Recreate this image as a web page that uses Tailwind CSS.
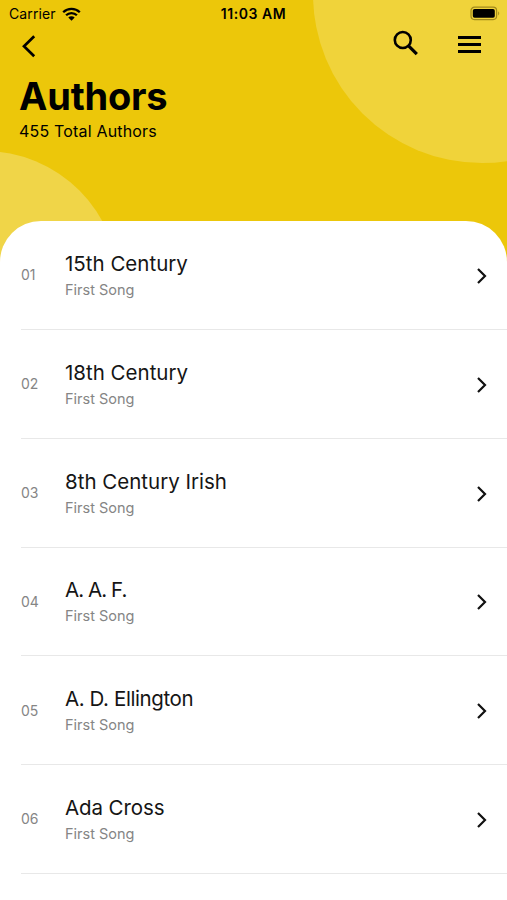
<!DOCTYPE html>
<html lang="en">
<head>
<meta charset="utf-8">
<title>Authors</title>
<script src="https://cdn.jsdelivr.net/npm/@tailwindcss/browser@4"></script>
</head>
<body class="bg-white font-['Inter',sans-serif] text-black">
<div class="relative h-[900px] w-[507px] overflow-hidden bg-[#ecc70a]">
  <div class="absolute left-[313px] top-[-175px] size-[338px] rounded-full bg-[#f0d33a]"></div>
  <div class="absolute left-[-151px] top-[151px] size-[270px] rounded-full bg-[#f0d548]"></div>
  <div class="relative flex h-full flex-col">
    <header class="h-[220.5px] shrink-0">
      <div class="grid h-[27px] grid-cols-3 items-center pl-[9px] pr-[6px] text-[14px]">
        <div class="flex items-center gap-[6px]"><span class="tracking-[0.1px]">Carrier</span>
          <svg class="h-[14px] w-[19px]" viewBox="0 0 19 14" fill="none" stroke="#000" stroke-width="2.3"><path d="M1.2 5.2a11.8 11.8 0 0 1 16.6 0M4.1 8.3a7.6 7.6 0 0 1 10.8 0"/><path d="M6.3 10.5a4.5 4.5 0 0 1 6.4 0L9.5 13.7z" fill="#000" stroke="none"/></svg>
        </div>
        <div class="-ml-[3px] text-center font-semibold tracking-[0.55px] whitespace-nowrap">11:03 AM</div>
        <svg class="h-[15px] w-[31px] justify-self-end" viewBox="0 0 31 15"><rect x="1" y="1.2" width="25.6" height="12.4" rx="3.5" fill="none" stroke="#a18a1c" stroke-width="1.2"/><rect x="2.8" y="3" width="22" height="8.8" rx="1.8"/><path d="M28.2 5.2q2 2.2 0 4.4z" fill="#a18a1c"/></svg>
      </div>
      <div class="flex h-[43px] items-start pl-[20px] pr-[25px]">
        <svg class="mt-[6px] h-[26px] w-[18px]" viewBox="0 0 18 26" fill="none" stroke="#000" stroke-width="2.7"><path d="M14.2 3.2 4 13.2l10.2 10"/></svg>
        <svg class="ml-auto mt-[3px] size-[27px]" viewBox="0 0 27 27" fill="none" stroke="#000"><circle cx="10.8" cy="10" r="8" stroke-width="2.6"/><path d="m16.8 16.2 8 8" stroke-width="3.2"/></svg>
        <svg class="ml-[38px] mt-[8px] h-[20px] w-[25px]" viewBox="0 0 25 20"><path d="M1 1h23v3H1zM1 8h23v3H1zM1 15h23v3H1z"/></svg>
      </div>
      <h1 class="pl-[19px] text-[38px] leading-[52px] font-bold tracking-[-0.2px]">Authors</h1>
      <p class="pl-[19px] text-[16px] leading-[18px] tracking-[0.18px]">455 Total Authors</p>
    </header>
    <main class="flex-1 rounded-t-[41px] bg-white">
      <div class="flex h-[108.5px] items-center pl-[21px]"><span class="w-[44px] text-[14px] text-[#858585]">01</span><div class="flex-1 pt-[3px]"><div class="text-[20.5px] leading-[27px] text-[#151515]">15th Century</div><div class="text-[14.5px] leading-[26px] text-[#858585]">First Song</div></div><svg class="mr-[18px] mt-[2px] h-[18px] w-[14px]" viewBox="0 0 14 18" fill="none" stroke="#111" stroke-width="2.2"><path d="m3 2 7 7-7 7"/></svg></div>
      <div class="ml-[21px] flex h-[108.75px] items-center border-t border-[#e8e8e8]"><span class="w-[44px] text-[14px] text-[#858585]">02</span><div class="flex-1 pt-[3px]"><div class="text-[20.5px] leading-[27px] text-[#151515]">18th Century</div><div class="text-[14.5px] leading-[26px] text-[#858585]">First Song</div></div><svg class="mr-[18px] mt-[2px] h-[18px] w-[14px]" viewBox="0 0 14 18" fill="none" stroke="#111" stroke-width="2.2"><path d="m3 2 7 7-7 7"/></svg></div>
      <div class="ml-[21px] flex h-[108.75px] items-center border-t border-[#e8e8e8]"><span class="w-[44px] text-[14px] text-[#858585]">03</span><div class="flex-1 pt-[3px]"><div class="text-[20.5px] leading-[27px] text-[#151515]">8th Century Irish</div><div class="text-[14.5px] leading-[26px] text-[#858585]">First Song</div></div><svg class="mr-[18px] mt-[2px] h-[18px] w-[14px]" viewBox="0 0 14 18" fill="none" stroke="#111" stroke-width="2.2"><path d="m3 2 7 7-7 7"/></svg></div>
      <div class="ml-[21px] flex h-[108.75px] items-center border-t border-[#e8e8e8]"><span class="w-[44px] text-[14px] text-[#858585]">04</span><div class="flex-1 pt-[3px]"><div class="text-[20.5px] leading-[27px] tracking-[-0.95px] text-[#151515]">A. A. F.</div><div class="text-[14.5px] leading-[26px] text-[#858585]">First Song</div></div><svg class="mr-[18px] mt-[2px] h-[18px] w-[14px]" viewBox="0 0 14 18" fill="none" stroke="#111" stroke-width="2.2"><path d="m3 2 7 7-7 7"/></svg></div>
      <div class="ml-[21px] flex h-[108.75px] items-center border-t border-[#e8e8e8]"><span class="w-[44px] text-[14px] text-[#858585]">05</span><div class="flex-1 pt-[3px]"><div class="text-[20.5px] leading-[27px] tracking-[-0.4px] text-[#151515]">A. D. Ellington</div><div class="text-[14.5px] leading-[26px] text-[#858585]">First Song</div></div><svg class="mr-[18px] mt-[2px] h-[18px] w-[14px]" viewBox="0 0 14 18" fill="none" stroke="#111" stroke-width="2.2"><path d="m3 2 7 7-7 7"/></svg></div>
      <div class="ml-[21px] flex h-[108.75px] items-center border-t border-[#e8e8e8]"><span class="w-[44px] text-[14px] text-[#858585]">06</span><div class="flex-1 pt-[3px]"><div class="text-[20.5px] leading-[27px] tracking-[-0.1px] text-[#151515]">Ada Cross</div><div class="text-[14.5px] leading-[26px] text-[#858585]">First Song</div></div><svg class="mr-[18px] mt-[2px] h-[18px] w-[14px]" viewBox="0 0 14 18" fill="none" stroke="#111" stroke-width="2.2"><path d="m3 2 7 7-7 7"/></svg></div>
      <div class="ml-[21px] border-t border-[#e8e8e8]"></div>
    </main>
  </div>
</div>
</body>
</html>
